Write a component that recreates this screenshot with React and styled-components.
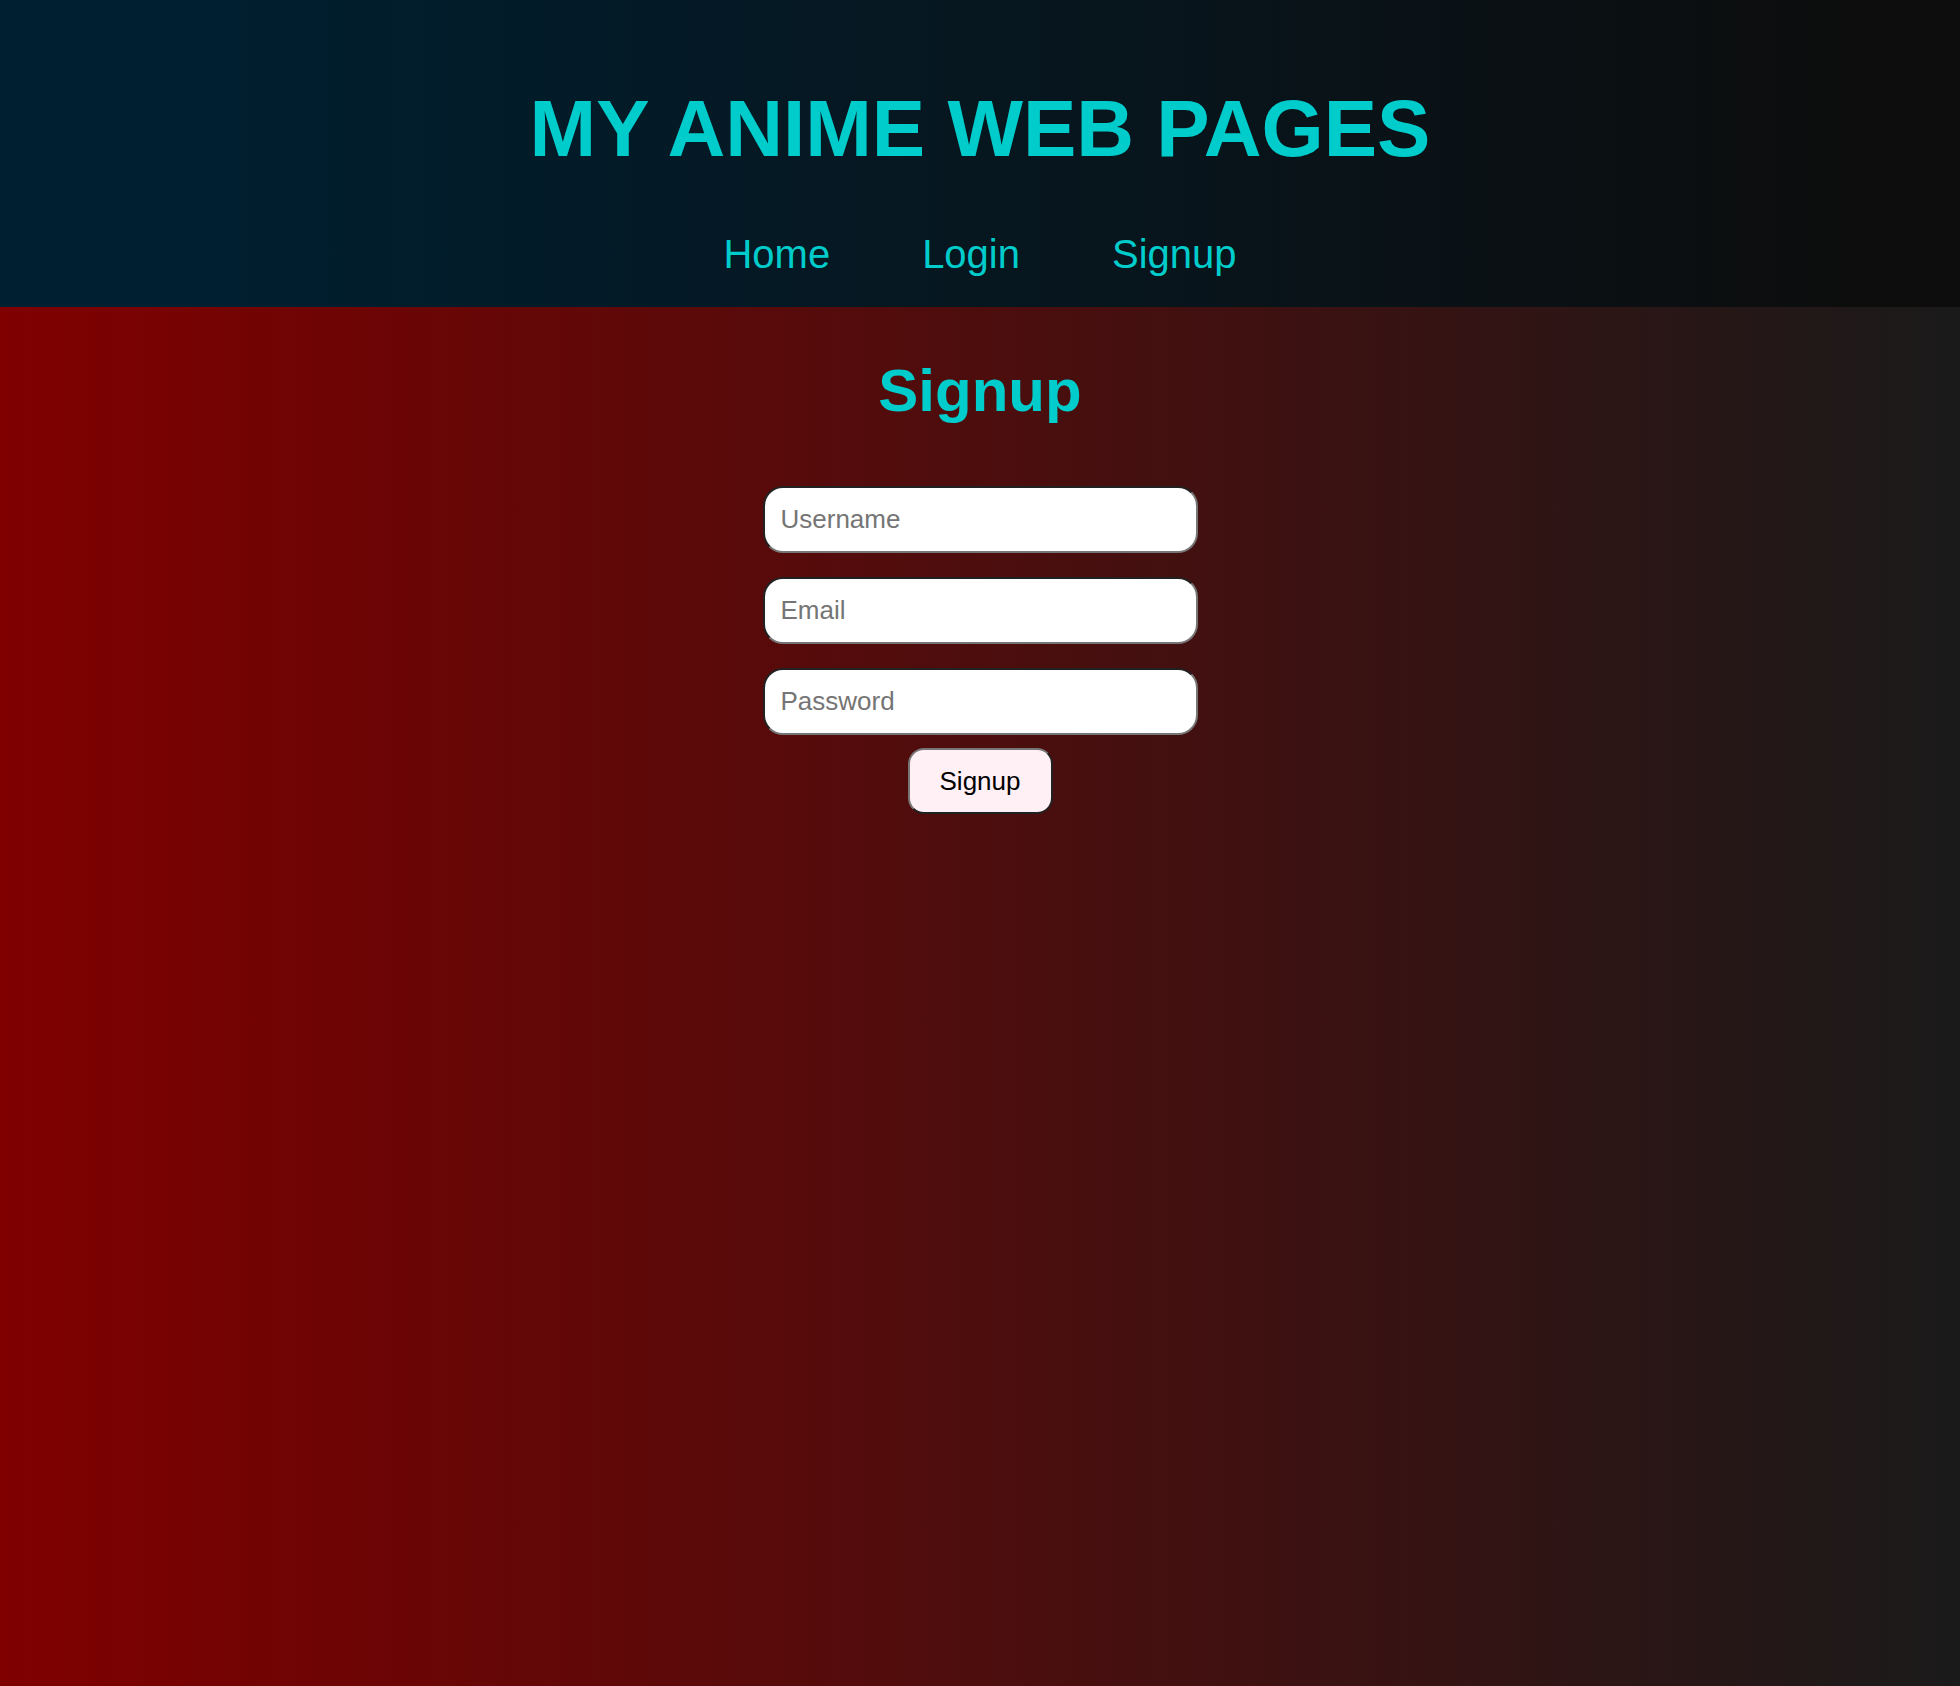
import React from "react";
import styled, { createGlobalStyle } from "styled-components";

const GlobalStyle = createGlobalStyle`
  html, body {
    margin: 0;
    padding: 0;
  }
  body {
    font-family: "Liberation Sans", Arial, sans-serif;
    background: #1a1a1a;
  }
  #root {
    min-height: 100vh;
    display: flex;
    flex-direction: column;
  }
`;

const Page = styled.div`
  flex: 1;
  display: flex;
  flex-direction: column;
  min-height: 100vh;
`;

const Header = styled.header`
  background: linear-gradient(to right, #001f30 10%, #0d0d0d 95%);
  padding: 83px 0 30px;
  text-align: center;
`;

const Title = styled.h1`
  margin: 0;
  color: #00cccc;
  font-size: 80px;
  font-weight: 700;
  line-height: normal;
`;

const NavList = styled.ul`
  list-style: none;
  margin: 57px 0 0;
  padding: 0;
  display: flex;
  justify-content: center;
  gap: 92px;
`;

const NavLink = styled.a`
  color: #00cccc;
  font-size: 40px;
  text-decoration: none;
  line-height: normal;
  cursor: pointer;
`;

const Main = styled.main`
  flex: 1;
  background: linear-gradient(to right, #800000, #1a1a1a);
  display: flex;
  flex-direction: column;
  align-items: center;
  padding-top: 49px;
`;

const Heading = styled.h2`
  margin: 0 0 61px;
  color: #00cccc;
  font-size: 60px;
  font-weight: 700;
  line-height: normal;
`;

const Form = styled.form`
  display: flex;
  flex-direction: column;
  align-items: center;
`;

const Field = styled.input`
  box-sizing: border-box;
  width: 435px;
  height: 67px;
  margin-bottom: ${(p) => (p.$last ? "13px" : "24px")};
  padding: 0 16px;
  font-family: "Liberation Sans", Arial, sans-serif;
  font-size: 26px;
  color: #222;
  background: #fff;
  border: 2px inset #767676;
  border-radius: 20px;
  outline: none;
  &::placeholder {
    color: #757575;
  }
`;

const SubmitButton = styled.button`
  box-sizing: border-box;
  width: 145px;
  height: 66px;
  font-family: "Liberation Sans", Arial, sans-serif;
  font-size: 26px;
  color: #000;
  background: #fff0f5;
  border: 2px outset #767676;
  border-radius: 16px;
  cursor: pointer;
`;

const links = ["Home", "Login", "Signup"];

export default function App() {
  return (
    <Page>
      <GlobalStyle />
      <Header>
        <Title>MY ANIME WEB PAGES</Title>
        <nav>
          <NavList>
            {links.map((l) => (
              <li key={l}>
                <NavLink href="#">{l}</NavLink>
              </li>
            ))}
          </NavList>
        </nav>
      </Header>
      <Main>
        <Heading>Signup</Heading>
        <Form onSubmit={(e) => e.preventDefault()}>
          <Field type="text" placeholder="Username" />
          <Field type="email" placeholder="Email" />
          <Field type="password" placeholder="Password" $last />
          <SubmitButton type="submit">Signup</SubmitButton>
        </Form>
      </Main>
    </Page>
  );
}
